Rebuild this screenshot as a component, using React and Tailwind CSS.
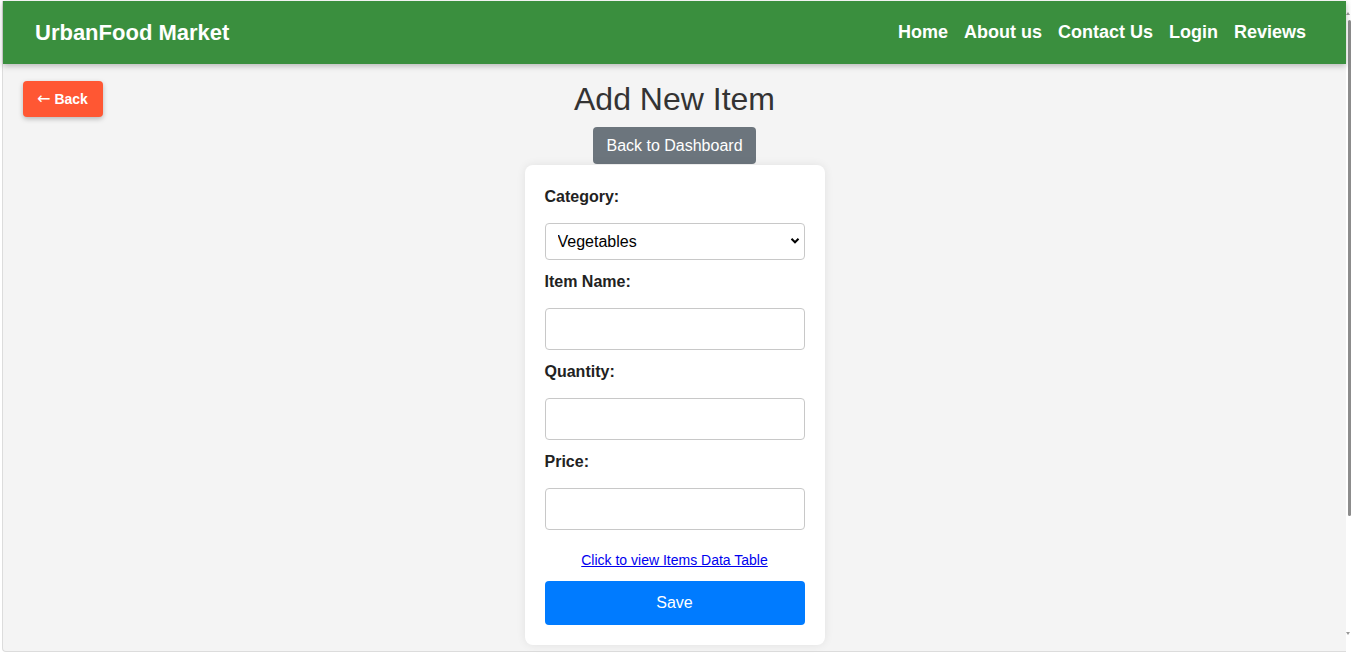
import React from "react";

export default function App() {
  const font = { fontFamily: '"Liberation Sans", Arial, sans-serif' };
  return (
    <div className="w-[1351px] h-[655px] bg-white flex overflow-hidden" style={font}>
      <div className="ml-[2px] mt-[1px] w-[1344px] h-[651px] bg-[#f4f4f4] border-l border-b border-[#dcdcdc] flex flex-col rounded-bl-[4px]">
        <header className="h-[63px] bg-[#3a8f3e] flex items-center justify-between pl-[32px] pr-[40px] shadow-[0_2px_6px_rgba(0,0,0,0.25)] relative z-10">
          <div className="text-white font-bold text-[22px] leading-none">UrbanFood Market</div>
          <nav className="flex gap-[16px] text-white font-bold text-[18px] leading-none mb-[2px]">
            <a>Home</a>
            <a>About us</a>
            <a>Contact Us</a>
            <a>Login</a>
            <a>Reviews</a>
          </nav>
        </header>
        <main className="relative flex-1 flex flex-col items-center">
          <button className="absolute top-[17px] left-[20px] h-[36px] pl-[14px] pr-[15px] bg-[#ff5733] text-white font-bold text-[14px] rounded-[4px] shadow-[0_2px_5px_rgba(0,0,0,0.25)] flex items-center">
            <span className="font-['DejaVu_Sans'] font-normal text-[16px] leading-none mr-[4px]">←</span>Back
          </button>
          <h2 className="mt-[17px] text-[32px] leading-[37px] text-[#333] font-normal">Add New Item</h2>
          <button className="mt-[9px] h-[37px] px-[13px] bg-[#6c757d] text-white text-[16px] rounded-[4px]">
            Back to Dashboard
          </button>
          <form className="mt-[1px] w-[300px] bg-white rounded-[8px] p-[20px] shadow-[0_0_10px_rgba(0,0,0,0.08)] flex flex-col">
            <label className="block font-bold text-[16px] leading-[23px] text-[#222]">Category:</label>
            <div className="relative mt-[15px]">
              <select className="appearance-none w-full h-[37px] border border-[#c8c8c8] rounded-[4px] pl-[12px] text-[16px] text-black bg-white">
                <option>Vegetables</option>
              </select>
              <svg className="absolute right-[5px] top-[14px] pointer-events-none" width="10" height="8" viewBox="0 0 10 8">
                <path d="M1.5 1.8 L5 5.3 L8.5 1.8" fill="none" stroke="#000" strokeWidth="2" />
              </svg>
            </div>
            <label className="block mt-[10px] font-bold text-[16px] leading-[23px] text-[#222]">Item Name:</label>
            <input className="mt-[15px] w-full h-[42px] border border-[#c8c8c8] rounded-[4px] px-[10px] bg-white" />
            <label className="block mt-[10px] font-bold text-[16px] leading-[23px] text-[#222]">Quantity:</label>
            <input className="mt-[15px] w-full h-[42px] border border-[#c8c8c8] rounded-[4px] px-[10px] bg-white" />
            <label className="block mt-[10px] font-bold text-[16px] leading-[23px] text-[#222]">Price:</label>
            <input className="mt-[15px] w-full h-[42px] border border-[#c8c8c8] rounded-[4px] px-[10px] bg-white" />
            <a className="mt-[20px] text-center text-[14px] leading-[20px] text-[#0000ee] underline">Click to view Items Data Table</a>
            <button type="button" className="mt-[11px] w-full h-[44px] bg-[#007bff] text-white text-[16px] rounded-[4px]">
              Save
            </button>
          </form>
        </main>
      </div>
      <div className="w-[5px] h-[652px] relative flex flex-col items-end">
        <div className="mt-[12px] mr-[1px] w-0 h-0 border-l-[2px] border-r-[2px] border-b-[3px] border-l-transparent border-r-transparent border-b-[#999]" />
        <div className="mt-[5px] w-[3px] h-[496px] bg-[#8c8c8c] rounded-[2px]" />
        <div className="mt-auto mb-[17px] mr-[1px] w-0 h-0 border-l-[2px] border-r-[2px] border-t-[3px] border-l-transparent border-r-transparent border-t-[#999]" />
      </div>
    </div>
  );
}
